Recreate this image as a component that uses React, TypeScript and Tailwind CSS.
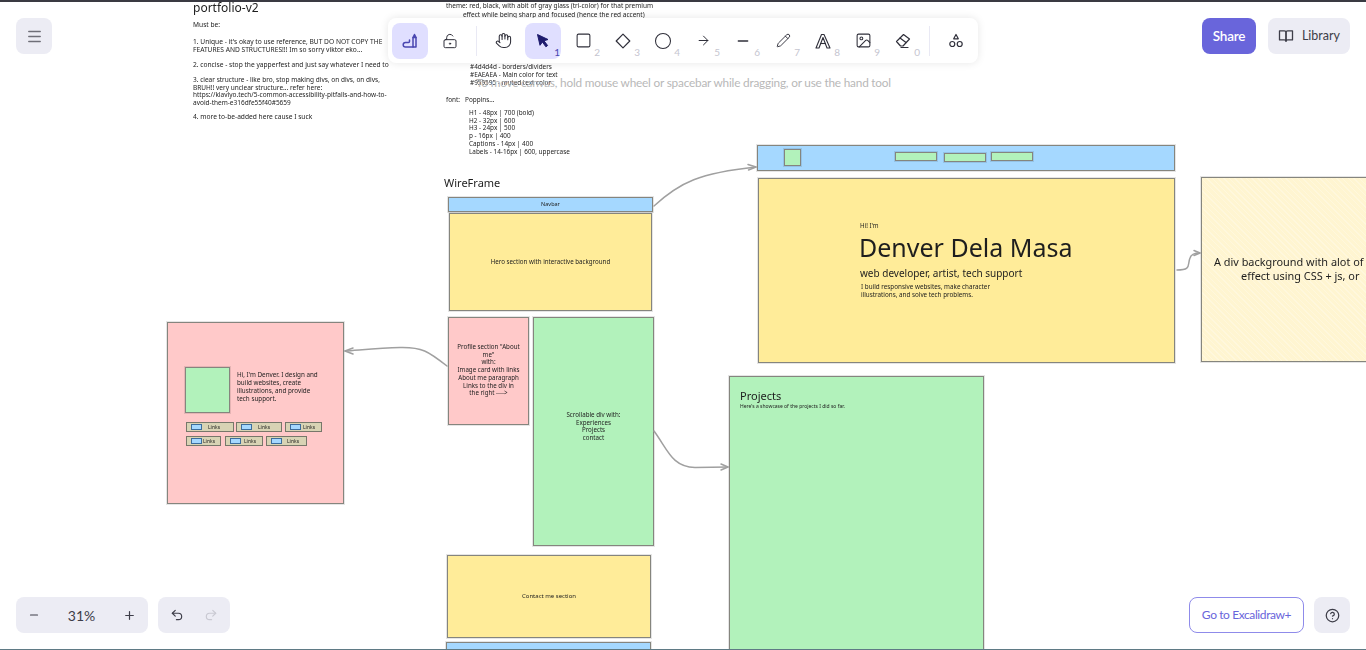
import { Hand, Square, Circle, ArrowRight, Minus, Plus, Pencil, Image, Menu, LockKeyholeOpen, Undo2, Redo2, CircleHelp } from 'lucide-react'
import type { ReactNode } from 'react'

const hand = "font-['Noto_Sans',sans-serif] text-[#1e1e1e]"

function Box({ className, children }: { className: string; children?: ReactNode }) {
  return <div className={`absolute border border-[#85857e] shadow-[0_0_0_1px_rgba(0,0,0,0.1)] ${className}`}>{children}</div>
}

function Note({ className, children }: { className: string; children: ReactNode }) {
  return <div className={`absolute whitespace-pre ${hand} ${className}`}>{children}</div>
}

function DrawIcon() {
  return (
    <svg width="18" height="18" viewBox="0 0 18 18" fill="none" stroke="currentColor" strokeWidth="1.5" strokeLinecap="round" strokeLinejoin="round">
      <path d="M12 5.500h3V15h-3z" />
      <path d="M12 5.500l1.500-3 1.500 3" />
      <path d="M12 15H4.500a2.300 2.300 0 0 1 0-4.600H7.500a1 1 0 0 0 1-1V8" />
    </svg>
  )
}

function PointerIcon() {
  return (
    <svg width="16" height="16" viewBox="0 0 16 16" fill="#1e1b6e" stroke="#1e1b6e" strokeWidth="1" strokeLinejoin="round">
      <path d="M2.500 1.500l10.500 5-4 1.300 3.600 4.700-1.700 1.300-3.500-4.800-2.400 3.300z" />
    </svg>
  )
}

function DiamondIcon() {
  return (
    <svg width="16" height="16" viewBox="0 0 16 16" fill="none" stroke="#2f2f3a" strokeWidth="1.2" strokeLinejoin="round">
      <path d="M8 1.200l6.800 6.800L8 14.800 1.200 8z" />
    </svg>
  )
}

function TextIcon() {
  return (
    <svg width="16" height="16" viewBox="0 0 16 16" fill="none" stroke="#2f2f3a" strokeWidth="1.1" strokeLinejoin="round">
      <path d="M1 15L6.500 1.500h2.500L15 15h-3L8 4.500 4 15z" />
      <path d="M5 10.500h6" />
    </svg>
  )
}

function EraserIcon() {
  return (
    <svg width="16" height="16" viewBox="0 0 16 16" fill="none" stroke="#2f2f3a" strokeWidth="1.2" strokeLinejoin="round" strokeLinecap="round">
      <path d="M1.500 8.500L8.500 1.500l6 4.500-6.500 7h-2.500z" />
      <path d="M5 5l6 4.500" />
      <path d="M6 14.500h7" />
    </svg>
  )
}

function ShapesIcon() {
  return (
    <svg width="16" height="16" viewBox="0 0 16 16" fill="none" stroke="#2f2f3a" strokeWidth="1.2" strokeLinejoin="round">
      <path d="M8 1.500l2.300 4.300H5.700z" />
      <circle cx="4.300" cy="11" r="2.500" />
      <circle cx="11.700" cy="11" r="2.500" />
    </svg>
  )
}

function LibraryIcon() {
  return (
    <svg width="16" height="16" viewBox="0 0 16 16" fill="none" stroke="#3d3d48" strokeWidth="1.300" strokeLinejoin="round">
      <path d="M1.500 2.800h4.800c1 0 1.700.6 1.700 1.500v8.900c0-.8-.7-1.300-1.700-1.300H1.500z" />
      <path d="M14.500 2.800H9.700C8.700 2.800 8 3.400 8 4.300v8.900c0-.8.7-1.300 1.700-1.300h4.800z" />
    </svg>
  )
}

function Tool({ icon, hotkey, active }: { icon: ReactNode; hotkey?: string; active?: boolean }) {
  return (
    <div className={`relative flex h-9 w-9 items-center justify-center rounded-lg ${active ? 'bg-[#e0dfff]' : ''}`}>
      {icon}
      {hotkey && (
        <span className={`absolute bottom-[2px] right-[1px] text-[10px] leading-none ${active ? 'text-[#4a47b1]' : 'text-[#c5c5d0]'}`}>{hotkey}</span>
      )}
    </div>
  )
}

function LinkChip({ className, label }: { className: string; label: string }) {
  return (
    <div className={`absolute flex items-center border border-[#77776a] bg-[#d8d3b4] pl-[4px] ${className}`}>
      <span className="h-[6px] w-[11px] border border-[#3d6d9c] bg-[#a5d8ff]" />
      <span className={`text-[5px] leading-none ${hand}`}>{label}</span>
    </div>
  )
}

function Canvas() {
  return (
    <div className="absolute inset-0 overflow-hidden bg-white blur-[0.4px]">
      {/* notes at the top left */}
      <Note className="left-[193px] top-0 text-[12px] leading-[16px]">portfolio-v2</Note>
      <Note className="left-[193px] top-[21px] text-[6.650px] leading-[8px]">Must be:</Note>
      <Note className="left-[193px] top-[38px] text-[6.650px] leading-[8px]">{'1. Unique - it\'s okay to use reference, BUT DO NOT COPY THE\nFEATURES AND STRUCTURES!!! Im so sorry viktor eko...'}</Note>
      <Note className="left-[193px] top-[61px] text-[6.650px] leading-[8px]">2. concise - stop the yapperfest and just say whatever I need to</Note>
      <Note className="left-[193px] top-[76px] text-[6.500px] leading-[7.500px]">{'3. clear structure - like bro, stop making divs, on divs, on divs,\nBRUH!! very unclear structure... refer here:\nhttps://klaviyo.tech/5-common-accessibility-pitfalls-and-how-to-\navoid-them-e316dfe55f40#5659'}</Note>
      <Note className="left-[193px] top-[113px] text-[6.650px] leading-[8px]">4. more to-be-added here cause I suck</Note>

      {/* notes behind the toolbar */}
      <Note className="left-[446px] top-[1px] text-[6.500px] leading-[9px]">{'theme: red, black, with abit of gray glass (tri-color) for that premium\n          effect while being sharp and focused (hence the red accent)'}</Note>
      <Note className="left-[470px] top-[63px] text-[6.400px] leading-[8px]">{'#4d4d4d - borders/dividers\n#EAEAEA - Main color for text\n#959595 - muted text color'}</Note>
      <Note className="left-[446px] top-[96px] text-[6.400px] leading-[8px]">{'font:   Poppins...'}</Note>
      <Note className="left-[469px] top-[109px] text-[6.400px] leading-[7.700px]">{'H1 - 48px | 700 (bold)\nH2 - 32px | 600\nH3 - 24px | 500\np - 16px | 400\nCaptions - 14px | 400\nLabels - 14-16px | 600, uppercase'}</Note>

      <Note className="left-[444px] top-[175px] text-[11px] leading-[16px]">WireFrame</Note>

      {/* wireframe column */}
      <Box className="left-[448px] top-[197px] flex h-[15px] w-[205px] items-center justify-center bg-[#a5d8ff]">
        <span className={`text-[5.500px] ${hand}`}>Navbar</span>
      </Box>
      <Box className="left-[449px] top-[213px] flex h-[98px] w-[203px] items-center justify-center bg-[#ffec99]">
        <span className={`text-[6.200px] ${hand}`}>Hero section with interactive background</span>
      </Box>
      <Box className="left-[448px] top-[317px] flex h-[108px] w-[81px] items-start justify-center bg-[#ffc9c9] pt-[25px]">
        <span className={`whitespace-pre text-center text-[6.200px] leading-[7.700px] ${hand}`}>{'Profile section "About\nme"\nwith:\nImage card with links\nAbout me paragraph\nLinks to the div in\nthe right ---->'}</span>
      </Box>
      <Box className="left-[533px] top-[317px] flex h-[229px] w-[121px] items-start justify-center bg-[#b2f2bb] pt-[93px]">
        <span className={`whitespace-pre text-center text-[6.200px] leading-[7.700px] ${hand}`}>{'Scrollable div with:\nExperiences\nProjects\ncontact'}</span>
      </Box>
      <Box className="left-[447px] top-[555px] flex h-[83px] w-[204px] items-center justify-center bg-[#ffec99]">
        <span className={`text-[6px] ${hand}`}>Contact me section</span>
      </Box>
      <Box className="left-[446px] top-[642px] h-[20px] w-[205px] bg-[#a5d8ff]" />

      {/* profile card */}
      <Box className="left-[167px] top-[322px] h-[182px] w-[177px] bg-[#ffc9c9]" />
      <Box className="left-[185px] top-[367px] h-[46px] w-[45px] bg-[#b2f2bb]" />
      <Note className="left-[237px] top-[371px] text-[6.300px] leading-[7.900px]">{'Hi, I\'m Denver. I design and\nbuild websites, create\nillustrations, and provide\ntech support.'}</Note>
      <LinkChip className="left-[186px] top-[422px] h-[10px] w-[48px] gap-[6px]" label="Links" />
      <LinkChip className="left-[236px] top-[422px] h-[10px] w-[46px] gap-[6px]" label="Links" />
      <LinkChip className="left-[285px] top-[422px] h-[10px] w-[37px] gap-[2px]" label="Links" />
      <LinkChip className="left-[186px] top-[436px] h-[10px] w-[35px] gap-[1px]" label="Links" />
      <LinkChip className="left-[225px] top-[436px] h-[10px] w-[38px] gap-[3px]" label="Links" />
      <LinkChip className="left-[266px] top-[436px] h-[10px] w-[41px] gap-[5px]" label="Links" />

      {/* navbar mock */}
      <Box className="left-[757px] top-[145px] h-[26px] w-[418px] bg-[#a5d8ff]" />
      <Box className="left-[784px] top-[149px] h-[17px] w-[17px] bg-[#b2f2bb]" />
      <Box className="left-[895px] top-[152px] h-[9px] w-[42px] bg-[#b2f2bb]" />
      <Box className="left-[944px] top-[153px] h-[9px] w-[42px] bg-[#b2f2bb]" />
      <Box className="left-[991px] top-[152px] h-[9px] w-[42px] bg-[#b2f2bb]" />

      {/* hero mock */}
      <Box className="left-[758px] top-[178px] h-[185px] w-[417px] bg-[#ffec99]" />
      <Note className="left-[860px] top-[222px] text-[6.200px] leading-[8px]">Hi! I'm</Note>
      <Note className="left-[859px] top-[230px] text-[25px] leading-[34px]">Denver Dela Masa</Note>
      <Note className="left-[860px] top-[266px] text-[10px] leading-[14px]">web developer, artist, tech support</Note>
      <Note className="left-[861px] top-[283px] text-[6.300px] leading-[8px]">{'I build responsive websites, make character\nillustrations, and solve tech problems.'}</Note>

      {/* background idea */}
      <Box className="left-[1201px] top-[177px] h-[185px] w-[300px] bg-[#fff5d1] bg-[repeating-linear-gradient(45deg,rgba(255,255,255,0.25)_0px,rgba(255,255,255,0.25)_1px,transparent_1px,transparent_4px)]" />
      <Note className="left-[1214px] top-[254px] text-[10.900px] leading-[15px]">A div background with alot of</Note>
      <Note className="left-[1241px] top-[268px] text-[10.900px] leading-[15px]">effect using CSS + js, or</Note>

      {/* projects mock */}
      <Box className="left-[729px] top-[376px] h-[290px] w-[255px] bg-[#b2f2bb]" />
      <Note className="left-[740px] top-[388px] text-[11px] leading-[16px]">Projects</Note>
      <Note className="left-[740px] top-[403px] text-[5px] leading-[7px]">Here's a showcase of the projects I did so far.</Note>

      {/* arrows between frames */}
      <svg className="absolute inset-0" width="1366" height="650" fill="none" stroke="#a0a0a0" strokeWidth="1.500" strokeLinecap="round" strokeLinejoin="round">
        <path d="M654 206C680 182 700 173 756 167" />
        <path d="M748 164.500l8 2.500-7.500 3" />
        <path d="M447 366C428 351 422 347 400 347.500C380 348 360 350 345 351" />
        <path d="M353 348l-8 3 8 3" />
        <path d="M654 431C668 450 672 467 695 467.500L728 467" />
        <path d="M721 464l7 3-7 3" />
        <path d="M1177 270C1192 270 1187 265 1190 258C1191 254 1194 253 1200 253" />
        <path d="M1194 250.500l6 2.500-6 2.500" />
      </svg>
    </div>
  )
}

export default function App() {
  return (
    <div className="relative h-[650px] w-[1366px] overflow-hidden bg-white font-['Lato',sans-serif]">
      <Canvas />
      <div className="absolute left-[476px] top-[74px] whitespace-pre text-[11.800px] leading-[17px] tracking-[-0.2px] text-[#b8b8b8]">To move canvas, hold mouse wheel or spacebar while dragging, or use the hand tool</div>
      <div className="absolute left-0 right-0 top-0 h-[2px] bg-[#3a3a42]" />
      <div className="absolute bottom-0 left-0 right-0 h-px bg-[#5f7a85]" />

      <div className="absolute inset-0 flex flex-col justify-between px-4 pb-[17px] pt-[18px]">
        {/* top row */}
        <div className="flex items-start justify-between">
          <div className="flex h-9 w-9 items-center justify-center rounded-lg bg-[#ececf4] text-[#6f6f78]">
            <Menu size={17} strokeWidth={2.2} />
          </div>
          <div className="ml-[336px] flex h-[45px] items-center rounded-lg bg-white p-1 shadow-[0_0_8px_rgba(0,0,0,0.1)]">
            <Tool active icon={<span className="text-[#4a47b1]"><DrawIcon /></span>} />
            <div className="ml-1"><Tool icon={<LockKeyholeOpen size={16} strokeWidth={1.5} className="text-[#2f2f3a]" />} /></div>
            <div className="mx-2 h-[30px] w-px bg-[#e9e9f4]" />
            <Tool icon={<Hand size={17} strokeWidth={1.5} className="text-[#2f2f3a]" />} />
            <div className="ml-1 flex gap-1">
              <Tool active hotkey="1" icon={<PointerIcon />} />
              <Tool hotkey="2" icon={<Square size={17} strokeWidth={1.5} className="text-[#2f2f3a]" />} />
              <Tool hotkey="3" icon={<DiamondIcon />} />
              <Tool hotkey="4" icon={<Circle size={18} strokeWidth={1.4} className="text-[#2f2f3a]" />} />
              <Tool hotkey="5" icon={<ArrowRight size={15} strokeWidth={1.6} className="text-[#2f2f3a]" />} />
              <Tool hotkey="6" icon={<Minus size={16} strokeWidth={2.2} className="text-[#2f2f3a]" />} />
              <Tool hotkey="7" icon={<Pencil size={15} strokeWidth={1.5} className="text-[#2f2f3a]" />} />
              <Tool hotkey="8" icon={<TextIcon />} />
              <Tool hotkey="9" icon={<Image size={17} strokeWidth={1.5} className="text-[#2f2f3a]" />} />
              <Tool hotkey="0" icon={<EraserIcon />} />
            </div>
            <div className="mx-2 h-[30px] w-px bg-[#e9e9f4]" />
            <Tool icon={<ShapesIcon />} />
          </div>
          <div className="ml-auto flex gap-3">
            <div className="flex h-9 w-[54px] items-center justify-center rounded-lg bg-[#6965db] text-[13.500px] font-semibold tracking-[-0.2px] text-white">Share</div>
            <div className="flex h-9 w-[82px] items-center justify-center gap-2 rounded-lg bg-[#ececf4] text-[12.500px] text-[#3d3d48]">
              <LibraryIcon />
              <span>Library</span>
            </div>
          </div>
        </div>

        {/* bottom row */}
        <div className="flex items-end justify-between">
          <div className="flex gap-[10px]">
            <div className="flex h-9 w-[132px] items-center justify-between rounded-lg bg-[#ececf4] px-3 text-[#3d3d48]">
              <Minus size={12} strokeWidth={2.2} />
              <span className="text-[14px]">31%</span>
              <Plus size={13} strokeWidth={2.2} />
            </div>
            <div className="flex h-9 w-[72px] items-center justify-between rounded-lg bg-[#ececf4] px-3">
              <Undo2 size={14} className="text-[#3d3d48]" />
              <Redo2 size={14} className="text-[#c9c9d2]" />
            </div>
          </div>
          <div className="flex items-center gap-[10px]">
            <div className="flex h-9 w-[115px] items-center justify-center rounded-lg border border-[#8f8bea] bg-white text-[12px] tracking-[-0.4px] text-[#6965db]">Go to Excalidraw+</div>
            <div className="flex h-9 w-9 items-center justify-center rounded-lg bg-[#ececf4] text-[#3d3d48]">
              <CircleHelp size={15} />
            </div>
          </div>
        </div>
      </div>
    </div>
  )
}
